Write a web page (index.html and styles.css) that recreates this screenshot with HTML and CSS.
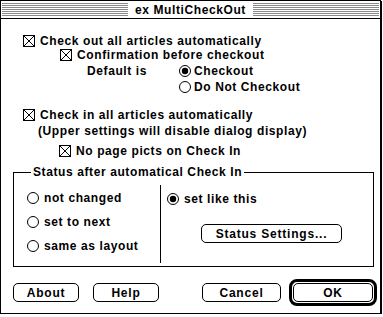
FILE: index.html
```html
<!DOCTYPE html>
<html lang="en">
<head>
  <meta charset="UTF-8">
  <title>ex MultiCheckOut</title>
  <link rel="stylesheet" href="styles.css">
</head>
<body>
  <svg width="0" height="0" class="defs">
    <symbol id="cb" viewBox="0 0 12 12">
      <rect x="0.5" y="0.5" width="11" height="11" fill="#fff" stroke="#000"/>
      <path d="M1 1 L11 11 M11 1 L1 11" stroke="#000" stroke-width="1"/>
    </symbol>
    <symbol id="rb" viewBox="0 0 12 12">
      <circle cx="6" cy="6" r="5.5" fill="#fff" stroke="#000"/>
    </symbol>
    <symbol id="rb-on" viewBox="0 0 12 12">
      <circle cx="6" cy="6" r="5.5" fill="#fff" stroke="#000"/>
      <circle cx="6" cy="6" r="3.2" fill="#000"/>
    </symbol>
  </svg>

  <div class="window">
    <div class="titlebar">
      <div class="stripes"><span class="title">ex MultiCheckOut</span></div>
    </div>

    <div class="content">
      <div class="opt row-1"><svg class="box"><use href="#cb"/></svg><span>Check out all articles automatically</span></div>
      <div class="opt row-2"><svg class="box"><use href="#cb"/></svg><span>Confirmation before checkout</span></div>
      <div class="opt row-3">
        <span class="default-label">Default is</span>
        <svg class="box"><use href="#rb-on"/></svg><span class="radio-text">Checkout</span>
      </div>
      <div class="opt row-4"><svg class="box"><use href="#rb"/></svg><span class="radio-text">Do Not Checkout</span></div>
      <div class="opt row-5"><svg class="box"><use href="#cb"/></svg><span>Check in all articles automatically</span></div>
      <div class="opt row-6"><span>(Upper settings will disable dialog display)</span></div>
      <div class="opt row-7"><svg class="box"><use href="#cb"/></svg><span>No page picts on Check In</span></div>

      <div class="group">
        <span class="legend">Status after automatical Check In</span>
        <div class="group-cols">
          <div class="col-left">
            <div class="ropt"><svg class="box"><use href="#rb"/></svg><span>not changed</span></div>
            <div class="ropt"><svg class="box"><use href="#rb"/></svg><span>set to next</span></div>
            <div class="ropt"><svg class="box"><use href="#rb"/></svg><span>same as layout</span></div>
          </div>
          <div class="col-right">
            <div class="ropt"><svg class="box"><use href="#rb-on"/></svg><span>set like this</span></div>
            <button class="btn btn-status">Status Settings...</button>
          </div>
        </div>
      </div>

      <div class="buttons">
        <button class="btn btn-about">About</button>
        <button class="btn btn-help">Help</button>
        <button class="btn btn-cancel">Cancel</button>
        <div class="default-ring"><button class="btn btn-ok">OK</button></div>
      </div>
    </div>
  </div>
</body>
</html>
```

FILE: styles.css
```css
* {
  box-sizing: border-box;
}

body {
  margin: 0;
  background: #fff;
  color: #000;
  font-family: "Liberation Sans", Arial, sans-serif;
  font-weight: bold;
  font-size: 12px;
  letter-spacing: 0.6px;
}

.defs {
  position: absolute;
}

.window {
  width: 381px;
  height: 314px;
  border: 1px solid #000;
  box-shadow: 1px 1px 0 #000;
}

.titlebar {
  height: 18px;
  border-bottom: 1px solid #000;
  padding: 2px 1px 1px;
}

.stripes {
  height: 14px;
  display: flex;
  justify-content: center;
  align-items: center;
  background: repeating-linear-gradient(#888 0 1px, #fff 1px 2px);
}

.title {
  background: #fff;
  padding: 0 7px;
  line-height: 14px;
}

.content {
  display: flex;
  flex-direction: column;
  align-items: flex-start;
}

.box {
  width: 12px;
  height: 12px;
  flex: none;
}

.opt {
  display: flex;
  align-items: center;
  gap: 5px;
  height: 14px;
  white-space: nowrap;
}

.radio-text {
  margin-left: -1px;
}

.row-1 { margin: 15px 0 0 22px; }
.row-2 { margin: 0 0 0 59px; }
.row-3 { margin: 2px 0 0 86px; gap: 0; }
.row-3 .box { margin-right: 4px; }
.row-4 { margin: 2px 0 0 178px; gap: 4px; }
.row-5 { margin: 14px 0 0 22px; }
.row-6 { margin: 2px 0 0 37px; }
.row-7 { margin: 6px 0 0 58px; }

.default-label {
  width: 92px;
}

.group {
  position: relative;
  margin: 14px 0 0 12px;
  width: 361px;
  height: 95px;
  border: 1px solid #000;
}

.legend {
  position: absolute;
  top: -8px;
  left: 17px;
  padding: 0 2px;
  background: #fff;
  line-height: 14px;
  white-space: nowrap;
}

.group-cols {
  display: grid;
  grid-template-columns: 146px 1fr;
  margin: 12px 0 3px;
  height: 78px;
}

.col-left {
  display: flex;
  flex-direction: column;
  gap: 8px;
  padding: 5px 0 0 13px;
}

.col-right {
  border-left: 1px solid #000;
  padding: 6px 0 0 6px;
}

.ropt {
  display: flex;
  align-items: center;
  gap: 5px;
  height: 16px;
  white-space: nowrap;
}

.btn {
  font: inherit;
  color: #000;
  background: #fff;
  border: 1px solid #000;
  border-radius: 5px;
  height: 19px;
  padding: 0;
  letter-spacing: 0.8px;
}

.btn-status {
  display: block;
  width: 141px;
  margin: 17px 0 0 34px;
}

.buttons {
  display: flex;
  align-items: center;
  margin: 12px 0 0 12px;
  height: 27px;
}

.btn-about { width: 66px; }
.btn-help { width: 66px; margin-left: 14px; }
.btn-cancel { width: 79px; margin-left: 43px; }

.default-ring {
  margin-left: 8px;
  border: 3px solid #000;
  border-radius: 8px;
  padding: 1px;
  display: flex;
}

.btn-ok { width: 80px; }
```
